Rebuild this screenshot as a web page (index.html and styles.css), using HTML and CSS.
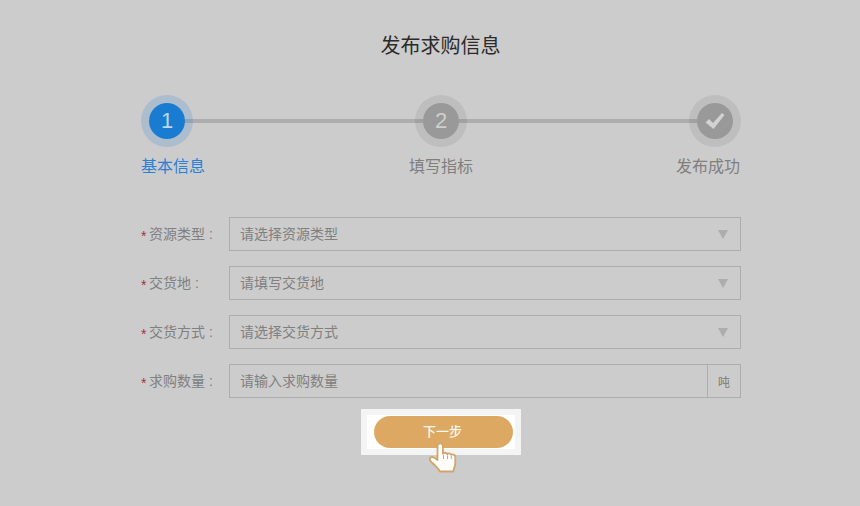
FILE: index.html
```html
<!DOCTYPE html>
<html lang="zh">
<head>
<meta charset="utf-8">
<title>发布求购信息</title>
<link rel="stylesheet" href="styles.css">
</head>
<body>
<main class="page">
  <h1 class="title">发布求购信息</h1>
  <div class="steps">
    <div class="track"></div>
    <div class="step step-start step-active">
      <div class="dot"><span class="num">1</span></div>
      <div class="step-label">基本信息</div>
    </div>
    <div class="step step-middle">
      <div class="dot"><span class="num">2</span></div>
      <div class="step-label">填写指标</div>
    </div>
    <div class="step step-end">
      <div class="dot">
        <svg class="check" width="22" height="18" viewBox="0 0 22 18"><path d="M1.500 10.500L5 7l4 4 9-10 2.500 2L9.500 17z" fill="#d2d2d2"/></svg>
      </div>
      <div class="step-label">发布成功</div>
    </div>
  </div>
  <form class="form">
    <div class="row">
      <div class="label"><span class="star">*</span>资源类型 :</div>
      <div class="field"><span class="ph">请选择资源类型</span><span class="arrow"></span></div>
    </div>
    <div class="row">
      <div class="label"><span class="star">*</span>交货地 :</div>
      <div class="field"><span class="ph">请填写交货地</span><span class="arrow"></span></div>
    </div>
    <div class="row">
      <div class="label"><span class="star">*</span>交货方式 :</div>
      <div class="field"><span class="ph">请选择交货方式</span><span class="arrow"></span></div>
    </div>
    <div class="row">
      <div class="label"><span class="star">*</span>求购数量 :</div>
      <div class="field field-unit"><span class="ph">请输入求购数量</span><span class="unit">吨</span></div>
    </div>
  </form>
  <div class="actions">
    <div class="frame">
      <div class="frame-inner">
        <div class="next">下一步</div>
      </div>
      <svg class="hand" width="30" height="31" viewBox="0 0 30 31">
        <path d="M9.500 16V4a2.700 2.700 0 0 1 5.400 0v7.800c.5-1.500 4.100-1.500 4.400.5.500-1.200 3.600-1.200 3.900.6.700-.9 4.100-.6 4.100 1.600V21c0 3.500-1.500 5-2 8.500H12c-1.200-2.500-3.500-4.500-6-7-1.500-1.500-4-3-4.300-5-.3-2 1.800-3 3.500-2.200 1.500.7 3 1.500 4.300 2.700z" fill="#fffdf9" stroke="#cfa56c" stroke-width="1.800" stroke-linejoin="round"/>
        <path d="M15.500 13v4M19.500 13.500v3.500M23.300 14v3" fill="none" stroke="#cfa56c" stroke-width="1"/>
      </svg>
    </div>
  </div>
</main>
</body>
</html>
```
FILE: styles.css
```css
* { box-sizing: border-box; }
html, body { margin: 0; padding: 0; }
body {
  width: 860px;
  height: 506px;
  overflow: hidden;
  background: #cccccc;
  font-family: "Liberation Sans", "Noto Sans CJK SC", sans-serif;
}
.page {
  width: 600px;
  margin-left: 141px;
  padding-top: 31px;
}
.title {
  margin: 0;
  height: 30px;
  padding-right: 1px;
  line-height: 30px;
  font-size: 20px;
  font-weight: 400;
  text-align: center;
  color: #2b2b2b;
}
.steps {
  position: relative;
  display: flex;
  justify-content: space-between;
  margin-top: 34px;
}
.track {
  position: absolute;
  left: 26px;
  right: 26px;
  top: 24px;
  height: 4px;
  background: #adadad;
}
.step {
  position: relative;
  display: flex;
  flex-direction: column;
  width: 64px;
}
.step-start { align-items: flex-start; }
.step-middle { align-items: center; }
.step-end { align-items: flex-end; }
.dot {
  display: flex;
  align-items: center;
  justify-content: center;
  width: 52px;
  height: 52px;
  border-radius: 50%;
  border: 8px solid rgba(0, 0, 0, 0.065);
  background: #999999;
  background-clip: padding-box;
}
.step-active .dot {
  border-color: rgba(26, 124, 209, 0.18);
  background-color: #1a7cd1;
}
.num {
  font-size: 22px;
  line-height: 1;
  color: #cfcfcf;
}
.step-active .num { color: #bcd7ee; }
.step-label {
  margin-top: 9px;
  width: 64px;
  height: 22px;
  line-height: 22px;
  font-size: 16px;
  color: #7f7f7f;
  white-space: nowrap;
}
.step-end .step-label { margin-right: 1px; }
.step-active .step-label { color: #2a80d4; }
.form {
  display: flex;
  flex-direction: column;
  gap: 15px;
  margin-top: 39px;
}
.row {
  display: flex;
  align-items: center;
  height: 34px;
}
.label {
  width: 88px;
  padding-bottom: 2px;
  font-size: 14px;
  color: #808080;
  white-space: nowrap;
}
.star {
  display: inline-block;
  width: 8px;
  color: #a83040;
  font-size: 14px;
  vertical-align: -2px;
}
.field {
  display: flex;
  align-items: center;
  justify-content: space-between;
  width: 512px;
  height: 34px;
  padding-left: 10px;
  border: 1px solid #adadad;
  font-size: 14px;
}
.ph {
  padding-bottom: 2px;
  color: #808080;
}
.arrow {
  width: 0;
  height: 0;
  margin-right: 12px;
  border-left: 5px solid transparent;
  border-right: 5px solid transparent;
  border-top: 9px solid #adadad;
}
.unit {
  display: flex;
  align-items: center;
  justify-content: center;
  width: 33px;
  height: 32px;
  border-left: 1px solid #adadad;
  font-size: 12px;
  color: #7f7a70;
}
.actions {
  display: flex;
  margin-top: 11px;
}
.frame {
  position: relative;
  width: 160px;
  height: 46px;
  margin-left: 220px;
  padding: 6px;
  background: #f4f4f4;
}
.frame-inner {
  height: 34px;
  padding: 1px 2px 1px 7px;
  background: #ffffff;
}
.next {
  width: 139px;
  height: 32px;
  padding-right: 2px;
  line-height: 31px;
  border-radius: 16px;
  background: #dda962;
  color: #fff8ee;
  font-size: 13px;
  font-weight: 500;
  text-align: center;
}
.hand {
  position: absolute;
  left: 67px;
  top: 33px;
}
```
